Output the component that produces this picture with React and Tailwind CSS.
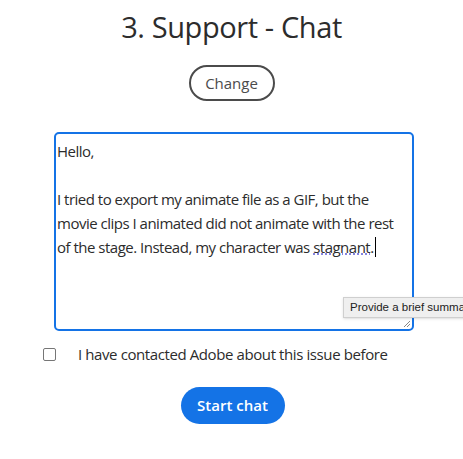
export default function App() {
  return (
    <div className="min-h-screen bg-white text-[#2c2c2c] [font-family:'Open_Sans',sans-serif] relative overflow-hidden">
      <div className="flex flex-col items-center">
        <h1 className="mt-[9px] text-[29px] leading-[36px] tracking-[-0.4px]">3. Support - Chat</h1>
        <button className="mt-[20px] h-[36px] w-[86px] rounded-full border-2 border-[#4b4b4b] text-[15px] text-[#4b4b4b]">
          Change
        </button>
      </div>
      <div className="ml-[54px] mt-[31px] w-[360px] h-[199px] rounded-[5px] border-2 border-[#1473e6] px-[1px] py-[5px] text-[15px] leading-[24px] tracking-[-0.5px] whitespace-nowrap relative">
        <p>Hello,</p>
        <p>&nbsp;</p>
        <p>I tried to export my animate file as a GIF, but the</p>
        <p>movie clips I animated did not animate with the rest</p>
        <p>
          of the stage. Instead, my character was{" "}
          <span className="underline decoration-dotted decoration-[#5b5bd6]">stagnant</span>
          <span className="border-r border-black pr-[1px]">.</span>
        </p>
        <svg className="absolute right-[1px] bottom-[1px]" width="9" height="9" viewBox="0 0 9 9">
          <path d="M8 2 L2 8 M8 5 L5 8" stroke="#888" strokeWidth="1" />
        </svg>
      </div>
      <div className="absolute left-[343px] top-[297px] h-[21px] whitespace-nowrap bg-[#efefef] border border-[#cfcfcf] shadow-sm pl-[6px] pr-2 text-[11.5px] leading-[19px] text-[#222] [font-family:'Liberation_Sans',sans-serif]">
        Provide a brief summary
      </div>
      <label className="flex items-center ml-[43px] mt-[13px]">
        <span className="w-[13px] h-[13px] rounded-[2px] border border-[#767676] bg-white" />
        <span className="ml-[22px] text-[15px] leading-[20px] tracking-[-0.4px]">I have contacted Adobe about this issue before</span>
      </label>
      <div className="flex justify-center mt-[23px]">
        <button className="ml-[2px] h-[37px] w-[104px] rounded-full bg-[#1473e6] text-white text-[15px] font-semibold">
          Start chat
        </button>
      </div>
    </div>
  );
}
